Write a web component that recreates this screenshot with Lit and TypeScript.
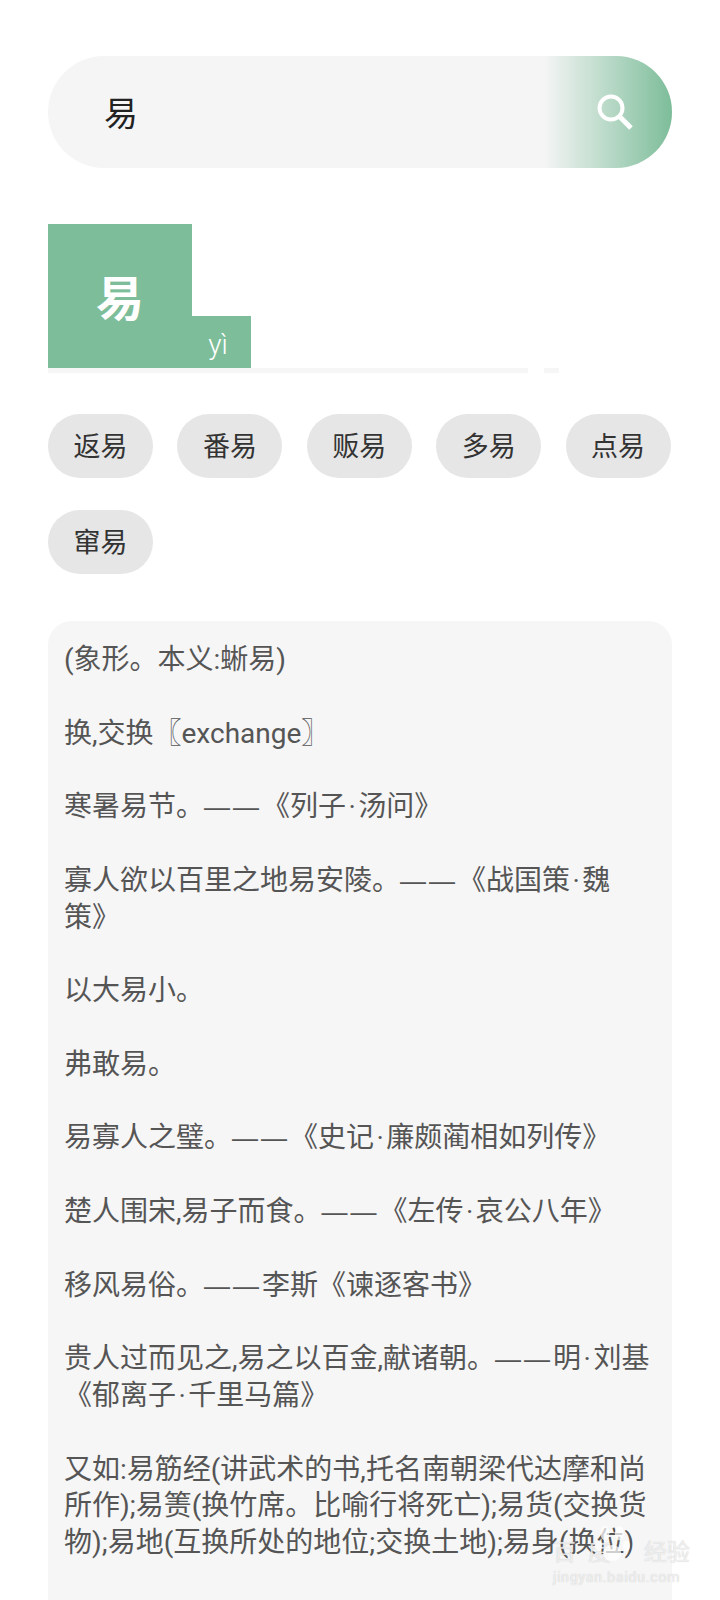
import { LitElement, html, css } from 'lit'
import { customElement, property } from 'lit/decorators.js'

const RELATED = ['返易', '番易', '贩易', '多易', '点易', '窜易']

const PARAGRAPHS = [
  '(象形。本义:蜥易)',
  '换,交换〖exchange〗',
  '寒暑易节。——《列子·汤问》',
  '寡人欲以百里之地易安陵。——《战国策·魏\n策》',
  '以大易小。',
  '弗敢易。',
  '易寡人之璧。——《史记·廉颇蔺相如列传》',
  '楚人围宋,易子而食。——《左传·哀公八年》',
  '移风易俗。——李斯《谏逐客书》',
  '贵人过而见之,易之以百金,献诸朝。——明·刘基《郁离子·千里马篇》',
  '又如:易筋经(讲武术的书,托名南朝梁代达摩和尚所作);易箦(换竹席。比喻行将死亡);易货(交换货物);易地(互换所处的地位;交换土地);易身(换位)',
]

@customElement('search-bar')
export class SearchBar extends LitElement {
  @property() value = ''

  static styles = css`
    :host { display: block; }
    .bar {
      display: flex;
      align-items: center;
      height: 112px;
      border-radius: 56px;
      background: #f5f5f5;
      overflow: hidden;
    }
    .value {
      flex: 1;
      padding: 4px 0 0 56px;
      font-family: Roboto, "Noto Sans CJK SC", sans-serif;
      font-size: 34px;
      line-height: 1;
      color: #222;
    }
    .btn {
      width: 128px;
      height: 100%;
      display: flex;
      align-items: center;
      justify-content: flex-end;
      padding-right: 38px;
      box-sizing: border-box;
      background: linear-gradient(90deg, #f5f5f5 0%, #7dbd9a 100%);
    }
    svg { display: block; }
  `

  render() {
    return html`
      <div class="bar">
        <div class="value">${this.value}</div>
        <div class="btn">
          <svg width="38" height="38" viewBox="0 0 38 38" fill="none" stroke="#fff">
            <circle cx="15" cy="15" r="11.5" stroke-width="4" />
            <path d="M24 24 L35 35" stroke-width="5" />
          </svg>
        </div>
      </div>
    `
  }
}

@customElement('app-root')
export class AppRoot extends LitElement {
  static styles = css`
    :host {
      display: block;
      height: 1600px;
      overflow: hidden;
      position: relative;
      background: #fff;
      font-family: Roboto, "Noto Sans CJK SC", sans-serif;
    }
    .page { padding: 56px 48px 0; }

    .tabs {
      display: flex;
      align-items: flex-end;
      margin-top: 56px;
    }
    .char {
      width: 144px;
      height: 144px;
      background: #7dbd9a;
      color: #fff;
      font-size: 48px;
      font-weight: 700;
      display: flex;
      align-items: center;
      justify-content: center;
      padding-bottom: 2px;
      box-sizing: border-box;
    }
    .pinyin {
      width: 59px;
      height: 52px;
      background: #7dbd9a;
      color: #fff;
      font-size: 28px;
      font-weight: 300;
      display: flex;
      align-items: center;
      justify-content: center;
      padding: 4px 7px 0 0;
      box-sizing: border-box;
    }
    .rule {
      display: flex;
      gap: 16px;
      height: 5px;
    }
    .rule i { background: #f5f6f5; }
    .rule i:first-child { width: 480px; }
    .rule i:last-child { width: 15px; }

    .chips {
      display: grid;
      grid-template-columns: repeat(5, 105px);
      column-gap: 24.4px;
      row-gap: 32px;
      margin-top: 41px;
    }
    .chip {
      height: 64px;
      border-radius: 32px;
      background: #e6e6e6;
      color: #333;
      font-size: 27px;
      display: flex;
      align-items: center;
      justify-content: center;
      padding-bottom: 4px;
      box-sizing: border-box;
    }

    .card {
      margin-top: 47px;
      padding: 21px 16px 200px;
      background: #f6f6f6;
      border-radius: 24px 24px 0 0;
      color: #555;
      font-size: 28px;
      line-height: 36.8px;
    }
    .card p { margin: 0 0 36.8px; white-space: pre-line; }
    .dash {
      font-family: "Liberation Sans", sans-serif;
      font-size: 26px;
      line-height: 0;
      letter-spacing: 3px;
    }
    .dot { padding: 0 2.5px; }

    .mark {
      position: absolute;
      left: 553px;
      top: 1538px;
      color: rgba(255, 255, 255, 0.72);
      text-shadow: 0 0 1px rgba(150, 150, 150, 0.6);
    }
    .logo {
      display: flex;
      gap: 21px;
      font-size: 23px;
      line-height: 30px;
      white-space: nowrap;
    }
    .logo span:first-child { letter-spacing: 12px; }
    .url {
      font-size: 14px;
      line-height: 18px;
      letter-spacing: 0.8px;
      white-space: nowrap;
    }
    .paw { position: absolute; left: 42px; top: -15px; }
  `

  // dashes and middle dots need other widths than Roboto gives them
  private line(text: string) {
    return text.split(/(——|·)/).map((part) => {
      if (part === '——') return html`<span class="dash">${part}</span>`
      if (part === '·') return html`<span class="dot">${part}</span>`
      return part
    })
  }

  render() {
    return html`
      <div class="page">
        <search-bar value="易"></search-bar>
        <div class="tabs">
          <div class="char">易</div>
          <div class="pinyin">yì</div>
        </div>
        <div class="rule"><i></i><i></i></div>
        <div class="chips">
          ${RELATED.map((w) => html`<div class="chip">${w}</div>`)}
        </div>
        <div class="card">
          ${PARAGRAPHS.map((p) => html`<p>${this.line(p)}</p>`)}
        </div>
      </div>
      <div class="mark">
        <svg class="paw" width="36" height="42" viewBox="0 0 40 44" fill="rgba(255,255,255,.72)">
          <ellipse cx="11" cy="10" rx="5" ry="8" />
          <ellipse cx="27" cy="10" rx="5" ry="8" />
          <ellipse cx="4" cy="24" rx="4" ry="6" />
          <ellipse cx="35" cy="24" rx="4" ry="6" />
          <ellipse cx="19" cy="32" rx="10" ry="9" />
        </svg>
        <div class="logo"><span>百度</span><span>经验</span></div>
        <div class="url">jingyan.baidu.com</div>
      </div>
    `
  }
}
